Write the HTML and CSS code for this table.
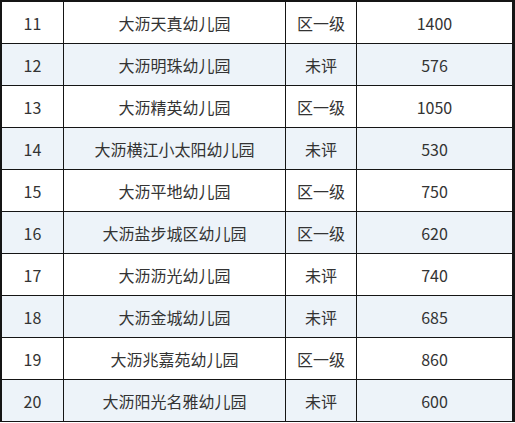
FILE: index.html
```html
<!DOCTYPE html>
<html lang="zh-CN">
<head>
<meta charset="utf-8">
<link rel="stylesheet" href="styles.css">
</head>
<body>
<div class="table">
  <div class="cell">11</div><div class="cell">大沥天真幼儿园</div><div class="cell">区一级</div><div class="cell">1400</div>
  <div class="cell alt">12</div><div class="cell alt">大沥明珠幼儿园</div><div class="cell alt">未评</div><div class="cell alt">576</div>
  <div class="cell">13</div><div class="cell">大沥精英幼儿园</div><div class="cell">区一级</div><div class="cell">1050</div>
  <div class="cell alt">14</div><div class="cell alt">大沥横江小太阳幼儿园</div><div class="cell alt">未评</div><div class="cell alt">530</div>
  <div class="cell">15</div><div class="cell">大沥平地幼儿园</div><div class="cell">区一级</div><div class="cell">750</div>
  <div class="cell alt">16</div><div class="cell alt">大沥盐步城区幼儿园</div><div class="cell alt">区一级</div><div class="cell alt">620</div>
  <div class="cell">17</div><div class="cell">大沥沥光幼儿园</div><div class="cell">未评</div><div class="cell">740</div>
  <div class="cell alt">18</div><div class="cell alt">大沥金城幼儿园</div><div class="cell alt">未评</div><div class="cell alt">685</div>
  <div class="cell">19</div><div class="cell">大沥兆嘉苑幼儿园</div><div class="cell">区一级</div><div class="cell">860</div>
  <div class="cell alt">20</div><div class="cell alt">大沥阳光名雅幼儿园</div><div class="cell alt">未评</div><div class="cell alt">600</div>
</div>
</body>
</html>
```

FILE: styles.css
```css
html, body {
  margin: 0;
  padding: 0;
  background: #ffffff;
}
body {
  width: 515px;
  height: 423px;
  overflow: hidden;
}
.table {
  display: grid;
  grid-template-columns: 61px 221px 70px 155px;
  grid-auto-rows: 41px;
  gap: 1px;
  padding: 2px 3px 1px 2px;
  background: #151515;
  width: max-content;
}
.cell {
  background: #ffffff;
  display: flex;
  align-items: center;
  justify-content: center;
  font-family: "Noto Sans CJK SC", "Noto Sans", sans-serif;
  font-size: 16px;
  color: #333333;
  white-space: nowrap;
}
.cell.alt {
  background: #edf3f9;
}
```
